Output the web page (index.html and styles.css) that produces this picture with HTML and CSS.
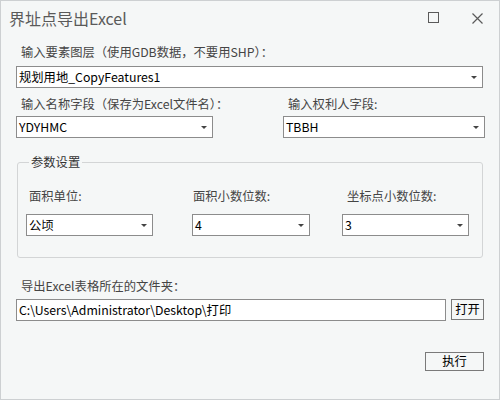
FILE: index.html
```html
<!DOCTYPE html>
<html lang="zh-CN">
<head>
<meta charset="utf-8">
<link rel="stylesheet" href="styles.css">
</head>
<body>
<div class="window">
  <div class="titlebar">
    <span class="title">界址点导出Excel</span>
    <div class="controls">
      <span class="maxbox"></span>
      <svg class="close" width="11" height="11" viewBox="0 0 11 11"><path d="M0.5 0.5 L10.5 10.5 M10.5 0.5 L0.5 10.5" stroke="#5a5a5a" stroke-width="1.2" fill="none"/></svg>
    </div>
  </div>
  <div class="content">
    <div class="label l1">输入要素图层（使用GDB数据，不要用SHP）：</div>
    <div class="combo c-full"><span>规划用地_CopyFeatures1</span><span class="arrow"></span></div>

    <div class="row2">
      <div class="field">
        <div class="label l2">输入名称字段（保存为Excel文件名）：</div>
        <div class="combo c-name"><span>YDYHMC</span><span class="arrow"></span></div>
      </div>
      <div class="field">
        <div class="label l2">输入权利人字段:</div>
        <div class="combo c-owner"><span>TBBH</span><span class="arrow"></span></div>
      </div>
    </div>

    <fieldset class="group">
      <legend>参数设置</legend>
      <div class="params">
        <div class="field">
          <div class="label l3 p1">面积单位:</div>
          <div class="combo c-p1"><span>公顷</span><span class="arrow"></span></div>
        </div>
        <div class="field">
          <div class="label l3 p2">面积小数位数:</div>
          <div class="combo c-p2"><span>4</span><span class="arrow"></span></div>
        </div>
        <div class="field">
          <div class="label l3 p3">坐标点小数位数:</div>
          <div class="combo c-p3"><span>3</span><span class="arrow"></span></div>
        </div>
      </div>
    </fieldset>

    <div class="label l4">导出Excel表格所在的文件夹：</div>
    <div class="pathrow">
      <div class="textbox">C:\Users\Administrator\Desktop\打印</div>
      <button class="btn btn-open">打开</button>
    </div>
    <div class="actions">
      <button class="btn btn-run">执行</button>
    </div>
  </div>
</div>
</body>
</html>
```

FILE: styles.css
```css
html, body {
  margin: 0;
  padding: 0;
}
body {
  font-family: "Noto Sans CJK SC", "Microsoft YaHei", sans-serif;
  background: #f5f7f7;
}
.window {
  width: 500px;
  height: 400px;
  box-sizing: border-box;
  border: 1px solid #cdd0d2;
  background: #f5f7f7;
  display: flex;
  flex-direction: column;
}
.titlebar {
  height: 33px;
  display: flex;
  align-items: center;
  justify-content: space-between;
  padding-left: 8px;
  padding-right: 16px;
}
.title {
  font-size: 16px;
  color: #5a5a5a;
  line-height: 20px;
  margin-top: 1px;
}
.controls {
  display: flex;
  align-items: center;
  gap: 33px;
}
.maxbox {
  width: 9px;
  height: 9px;
  border: 1px solid #5a5a5a;
  display: block;
}
.close {
  display: block;
  margin-top: 2px;
}
.content {
  padding: 0 15px 0 15px;
  display: flex;
  flex-direction: column;
}
.label {
  font-size: 12.3px;
  line-height: 18px;
  color: #454545;
  padding-left: 5px;
  white-space: nowrap;
}
.l1 { margin-top: 9px; margin-bottom: 5px; }
.l2 { margin-top: 7px; margin-bottom: 3px; }
.l4 { margin-top: 19px; margin-bottom: 4px; }

.combo {
  box-sizing: border-box;
  height: 22px;
  border: 1px solid #8c8c8c;
  background: #fff;
  display: flex;
  align-items: center;
  justify-content: space-between;
  padding-left: 2px;
  padding-right: 5px;
  font-size: 12.3px;
  color: #000;
}
.arrow {
  width: 0;
  height: 0;
  border-left: 3px solid transparent;
  border-right: 3px solid transparent;
  border-top: 3px solid #444;
  margin-top: 1px;
}
.c-full { width: 467px; }
.row2 {
  display: grid;
  grid-template-columns: 267px 202px;
}
.c-name { width: 197px; }
.c-owner { width: 202px; }

.group {
  margin: 16px 0 0 1px;
  padding: 0 0 21px 8px;
  width: 466px;
  box-sizing: border-box;
  border: 1px solid #d3d5d6;
  border-radius: 3px;
}
.group legend {
  font-size: 12.3px;
  line-height: 16px;
  color: #333;
  padding: 0 2px;
  margin-left: 3px;
}
.params {
  display: grid;
  grid-template-columns: 166px 150px 127px;
  padding-top: 17px;
}
.l3 { margin-bottom: 9px; }
.p1 { padding-left: 3px; }
.p2 { padding-left: 1px; }
.p3 { padding-left: 5px; }
.c-p1 { width: 127px; }
.c-p2 { width: 118px; }
.c-p3 { width: 127px; }

.pathrow {
  display: flex;
  gap: 5px;
}
.textbox {
  box-sizing: border-box;
  width: 430px;
  height: 22px;
  border: 1px solid #8c8c8c;
  background: #fff;
  font-size: 12.3px;
  line-height: 20px;
  padding-left: 2px;
  color: #000;
  white-space: nowrap;
}
.btn {
  box-sizing: border-box;
  margin: 0;
  padding: 0;
  background: #f5f7f7;
  border: 1px solid #7a7a7a;
  border-radius: 0;
  font-family: "Noto Sans CJK SC", "Microsoft YaHei", sans-serif;
  font-size: 12.3px;
  color: #000;
}
.btn-open {
  width: 33px;
  height: 21px;
  line-height: 19px;
}
.actions {
  display: flex;
  justify-content: flex-end;
  margin-top: 31px;
}
.btn-run {
  width: 59px;
  height: 19px;
  line-height: 17px;
}
```
